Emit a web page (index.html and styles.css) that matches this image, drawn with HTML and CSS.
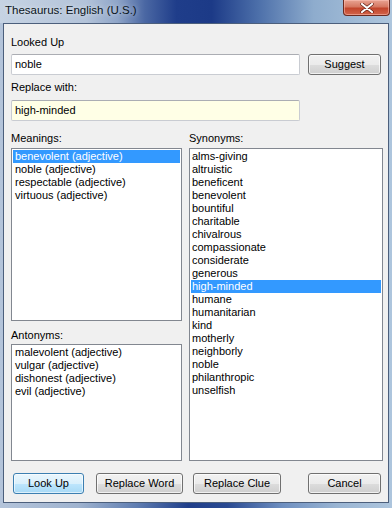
FILE: index.html
```html
<!DOCTYPE html>
<html lang="en">
<head>
    <meta charset="UTF-8">
    <title>Thesaurus: English (U.S.)</title>
    <link rel="stylesheet" href="styles.css">
</head>
<body>
    <div class="window">
        <div class="titlebar">
            <span class="title">Thesaurus: English (U.S.)</span>
            <div class="close">
                <svg width="14" height="10" viewBox="0 0 14 10">
                    <path d="M2 1 L12 9 M12 1 L2 9" stroke="#5a1a10" stroke-width="3.4" stroke-linecap="round"/>
                    <path d="M2 1 L12 9 M12 1 L2 9" stroke="#ffffff" stroke-width="2.2" stroke-linecap="round"/>
                </svg>
            </div>
        </div>
        <div class="client">
            <div class="label">Looked Up</div>
            <div class="row">
                <div class="field">noble</div>
                <div class="button suggest">Suggest</div>
            </div>
            <div class="label label-gap">Replace with:</div>
            <div class="row">
                <div class="field replace">high-minded</div>
            </div>

            <div class="lists">
                <div class="col-left">
                    <div class="label">Meanings:</div>
                    <div class="listbox meanings">
                        <div class="item selected">benevolent (adjective)</div>
                        <div class="item">noble (adjective)</div>
                        <div class="item">respectable (adjective)</div>
                        <div class="item">virtuous (adjective)</div>
                    </div>
                    <div class="label antonyms-label">Antonyms:</div>
                    <div class="listbox antonyms">
                        <div class="item">malevolent (adjective)</div>
                        <div class="item">vulgar (adjective)</div>
                        <div class="item">dishonest (adjective)</div>
                        <div class="item">evil (adjective)</div>
                    </div>
                </div>
                <div class="col-right">
                    <div class="label">Synonyms:</div>
                    <div class="listbox synonyms">
                        <div class="item">alms-giving</div>
                        <div class="item">altruistic</div>
                        <div class="item">beneficent</div>
                        <div class="item">benevolent</div>
                        <div class="item">bountiful</div>
                        <div class="item">charitable</div>
                        <div class="item">chivalrous</div>
                        <div class="item">compassionate</div>
                        <div class="item">considerate</div>
                        <div class="item">generous</div>
                        <div class="item selected">high-minded</div>
                        <div class="item">humane</div>
                        <div class="item">humanitarian</div>
                        <div class="item">kind</div>
                        <div class="item">motherly</div>
                        <div class="item">neighborly</div>
                        <div class="item">noble</div>
                        <div class="item">philanthropic</div>
                        <div class="item">unselfish</div>
                    </div>
                </div>
            </div>

            <div class="buttons">
                <div class="button default lookup">Look Up</div>
                <div class="button replace-word">Replace Word</div>
                <div class="button replace-clue">Replace Clue</div>
                <div class="button cancel">Cancel</div>
            </div>
        </div>
    </div>
</body>
</html>
```

FILE: styles.css
```css
html, body {
    margin: 0;
    padding: 0;
}
body {
    width: 392px;
    height: 508px;
    overflow: hidden;
    font-family: "Liberation Sans", Arial, sans-serif;
    font-size: 11px;
    color: #000;
}
.window {
    height: 508px;
    display: flex;
    flex-direction: column;
    background: linear-gradient(90deg, #b4c4da 0%, #9fb3cf 20%, #5f7db1 35%, #1f3e8a 48%, #2a4a92 58%, #6e8fc0 72%, #9ab5d3 86%, #adc5dd 100%);
}
.titlebar {
    height: 23px;
    display: flex;
    justify-content: space-between;
    background: linear-gradient(90deg, #c6d3e3 0%, #b3c3d9 22%, #8fa5c8 30%, #4a67a3 37%, #1f3d8a 45%, #1c3a87 54%, #4d70aa 66%, #8eaccd 80%, #aec6dd 100%);
}
.title {
    padding: 4px 0 0 5px;
    font-size: 11.5px;
    line-height: 13px;
    color: #0a1420;
    text-shadow: 0 0 5px rgba(255, 255, 255, 0.7);
}
.close {
    width: 45px;
    height: 15px;
    margin-right: 2px;
    display: flex;
    align-items: center;
    justify-content: center;
    border: 1px solid #6b2a20;
    border-top: none;
    border-radius: 0 0 4px 4px;
    background: linear-gradient(180deg, #e8a493 0%, #d67862 45%, #c2452c 55%, #d2644a 100%);
    box-shadow: inset 0 0 0 1px rgba(255, 200, 190, 0.5);
}
.client {
    height: 480px;
    margin: 0 3px;
    box-sizing: border-box;
    border: 1px solid #4c5f7c;
    background: #f0f0f0;
    padding: 12px 5px 0 7px;
}
.label {
    height: 13px;
    line-height: 13px;
}
.label-gap {
    margin-top: 6px;
}
.row {
    display: flex;
    margin-top: 5px;
}
.row + .label-gap + .row {
    margin-top: 6px;
}
.field {
    width: 289px;
    height: 21px;
    box-sizing: border-box;
    border: 1px solid #c9ccd2;
    border-top-color: #abadb3;
    border-radius: 2px;
    background: #fff;
    line-height: 19px;
    padding-left: 3px;
}
.replace {
    background: #ffffe6;
}
.button {
    height: 21px;
    box-sizing: border-box;
    border: 1px solid #707070;
    border-radius: 3px;
    background: linear-gradient(180deg, #f2f2f2 0%, #ebebeb 50%, #dddddd 51%, #cfcfcf 100%);
    box-shadow: inset 0 0 0 1px rgba(255, 255, 255, 0.7);
    text-align: center;
    line-height: 19px;
}
.suggest {
    width: 73px;
    margin-left: 8px;
}
.lists {
    display: flex;
    gap: 7px;
    margin-top: 11px;
}
.col-left {
    width: 171px;
}
.col-right {
    width: 194px;
}
.listbox {
    margin-top: 3px;
    box-sizing: border-box;
    border: 1px solid #828790;
    background: #fff;
    padding: 1px;
}
.meanings {
    height: 173px;
}
.antonyms-label {
    margin-top: 8px;
}
.antonyms {
    height: 117px;
    margin-top: 2px;
}
.synonyms {
    height: 313px;
}
.item {
    height: 13px;
    line-height: 13px;
    padding-left: 2px;
    white-space: nowrap;
}
.synonyms .item {
    padding-left: 1px;
}
.selected {
    background: #3399ff;
    color: #fff;
}
.buttons {
    display: flex;
    margin-top: 12px;
}
.lookup {
    width: 71px;
    margin-left: 2px;
}
.replace-word {
    width: 87px;
    margin-left: 12px;
}
.replace-clue {
    width: 88px;
    margin-left: 10px;
}
.cancel {
    width: 73px;
    margin-left: 27px;
}
.default {
    border-color: #3c7fb1;
    background: linear-gradient(180deg, #eaf6fd 0%, #d9f0fc 50%, #bee6fd 51%, #a7d9f5 100%);
    box-shadow: inset 0 0 0 1px rgba(255, 255, 255, 0.6);
}
```
